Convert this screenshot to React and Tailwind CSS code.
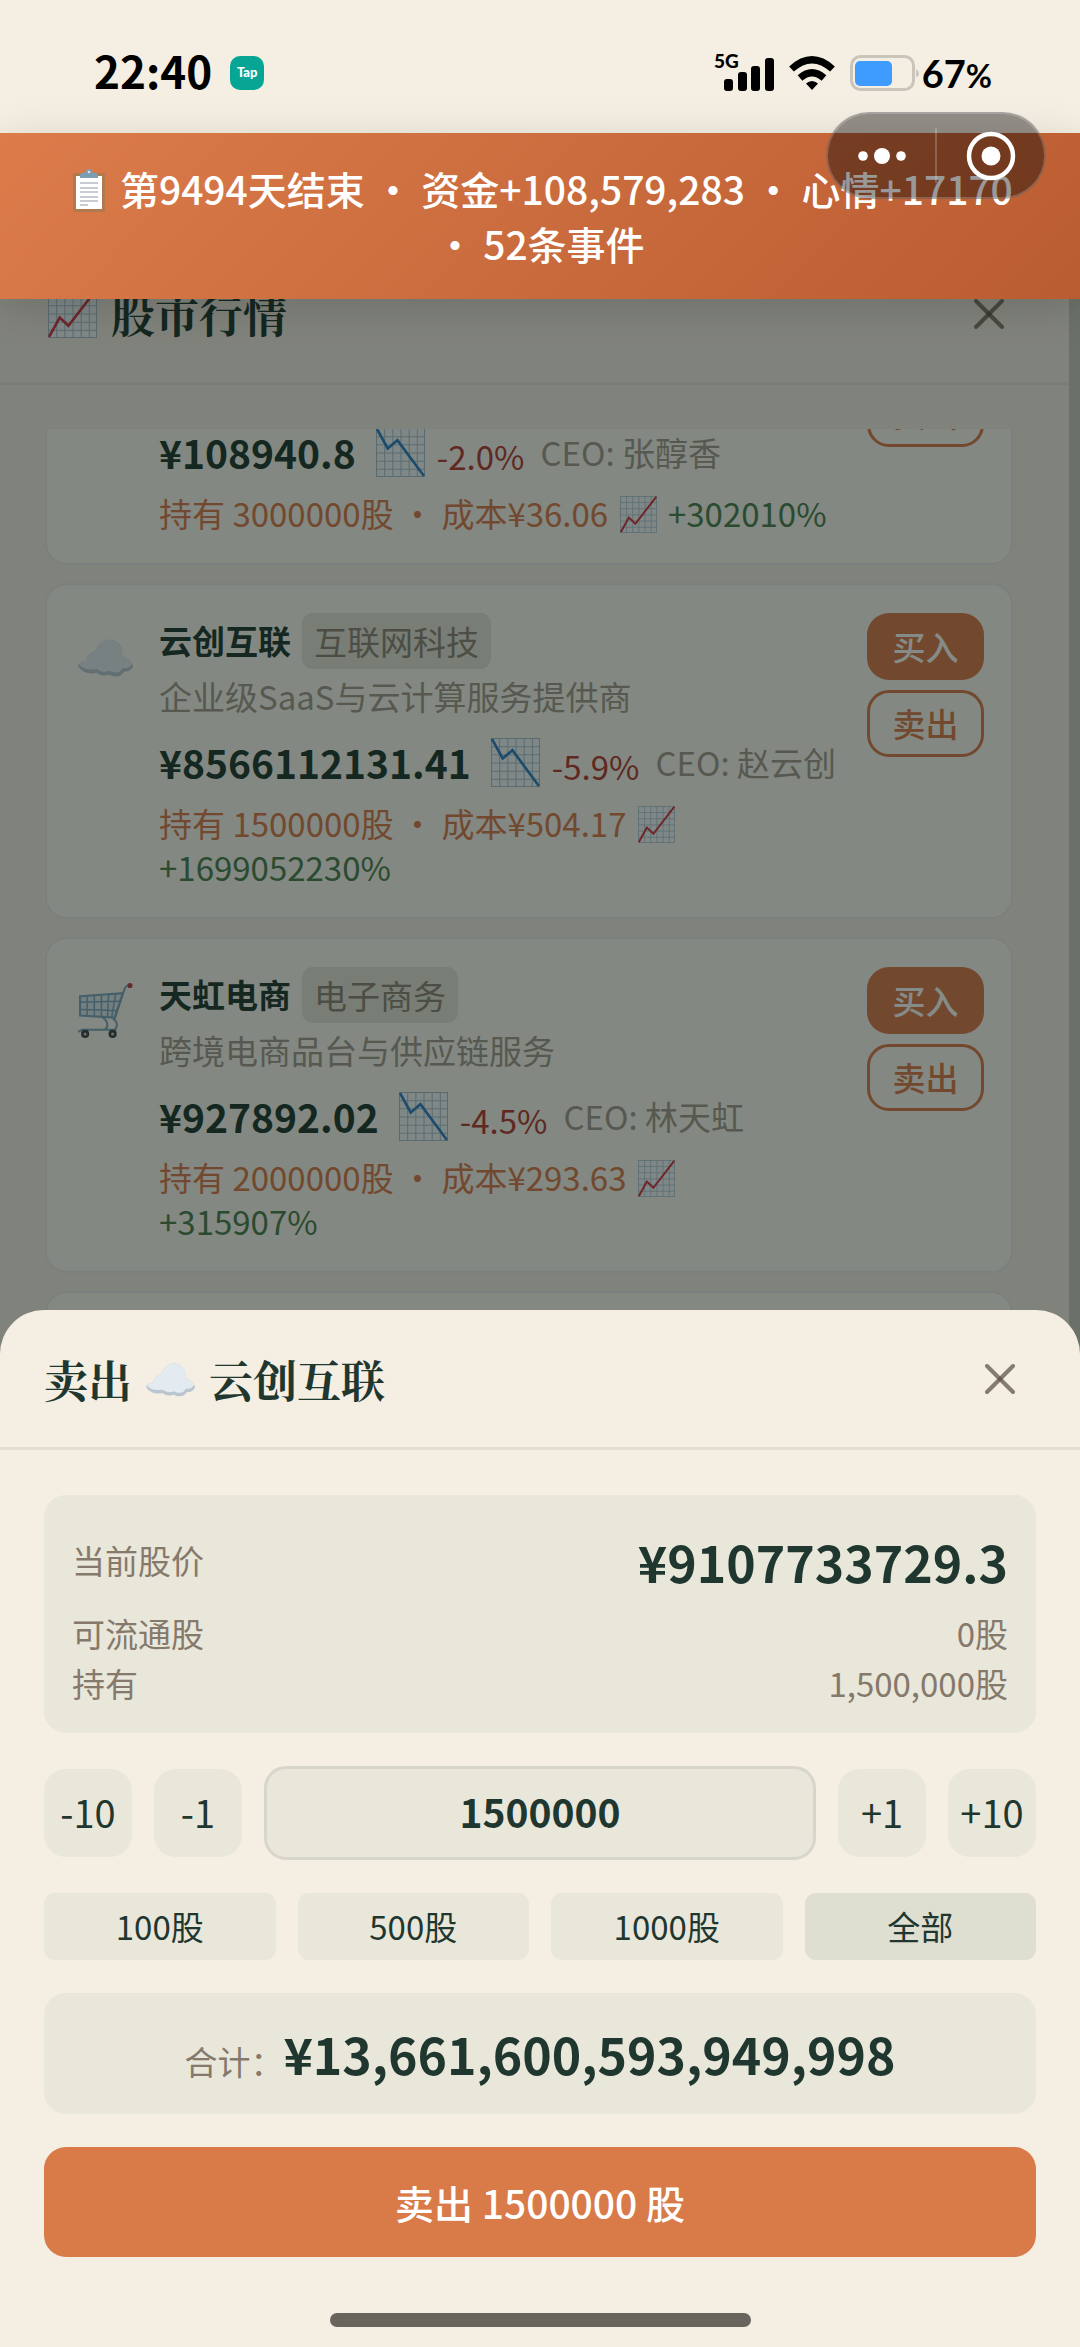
import { useState } from 'react';

const STOCKS = [
  { id: 1, price: '108940.8', change: '-2.0%', ceo: '张醇香', held: '3000000', cost: '36.06', gain: '+302010%' },
  { id: 2, Icon: Cloud, name: '云创互联', tag: '互联网科技', desc: '企业级SaaS与云计算服务提供商', price: '8566112131.41', change: '-5.9%', ceo: '赵云创', held: '1500000', cost: '504.17', gain: '+1699052230%' },
  { id: 3, Icon: Cart, name: '天虹电商', tag: '电子商务', desc: '跨境电商品台与供应链服务', price: '927892.02', change: '-4.5%', ceo: '林天虹', held: '2000000', cost: '293.63', gain: '+315907%' },
];

const serif = "font-['Noto_Serif_CJK_SC','Liberation_Serif','Noto_Sans_CJK_SC',serif]";

function Chart({ down, className }) {
  return (
    <svg viewBox="0 0 48 48" className={className} aria-hidden="true">
      <rect x="0.5" y="0.5" width="47" height="47" fill="#f3f8fb" stroke="#a9bfcb" />
      <path d="M8.5 0v48M16.5 0v48M24.5 0v48M32.5 0v48M40.5 0v48M0 8.5h48M0 16.5h48M0 24.5h48M0 32.5h48M0 40.5h48" stroke="#a9c0cd" strokeWidth="1" />
      {down
        ? <path d="M1 1L11.500 20L21 12L47 47" fill="none" stroke="#2f7fc4" strokeWidth="2.600" />
        : <path d="M1 47L11.500 28L20 36L47 1" fill="none" stroke="#d2343f" strokeWidth="2.600" />}
    </svg>
  );
}

function Cloud({ className }) {
  return (
    <svg viewBox="0 0 54 54" className={className} aria-hidden="true">
      <path d="M0 36C1 33 6 32 8 31C9 25 13 23 17 22C20 12 29 8 37 12C43 15 44 21 43 26C48 28 53 32 54 36C53 41 48 42 45 42C43 47 36 48 31 45C26 46 21 46 18 43C11 45 3 42 0 36Z" fill="#b9c6d0" />
      <path d="M1 35C2 33 6 32 8 31C9 25 13 23 17 22C20 12 29 8 37 12C43 15 44 21 43 26C48 28 52 31 53 34C51 38 47 39 44 38C42 43 36 44 31 41C26 43 22 42 18 39C11 41 5 39 1 35Z" fill="#e3ebf1" />
    </svg>
  );
}

function Cart({ className }) {
  return (
    <svg viewBox="0 0 54 54" className={className} fill="none" aria-hidden="true">
      <path d="M2 13L44 10L36 34L2 32Z" fill="#dbe6ec" stroke="#7fa6bd" strokeWidth="2" />
      <path d="M9 13v19M16 12v20M23 12v21M30 11l-1 22M37 11l-4 23M2 19l39-1M2 26l37 1" stroke="#7fa6bd" strokeWidth="1.500" />
      <path d="M36 35L45 8C46 4 48 2 51 2" stroke="#7fa6bd" strokeWidth="2" />
      <path d="M24 34C30 37 30 44 26 46M34 35C40 38 39 45 34 47M0 48L4 46H38" stroke="#7fa6bd" strokeWidth="2" />
      <circle cx="51" cy="2.500" r="2.500" fill="#b8414a" />
      <circle cx="7" cy="50" r="4" fill="#3a4246" /><circle cx="7" cy="50" r="1.500" fill="#c8ccce" />
      <circle cx="34" cy="50" r="4" fill="#3a4246" /><circle cx="34" cy="50" r="1.500" fill="#c8ccce" />
    </svg>
  );
}

function Clipboard({ className }) {
  return (
    <svg viewBox="0 0 44 44" className={className} aria-hidden="true">
      <rect x="6" y="5" width="32" height="39" rx="2" fill="#b07a4f" />
      <path d="M9 8H35V41H9Z" fill="#fff" />
      <path d="M13 15h18M13 20h18M13 24h18M13 29h18M13 33h18M13 37h8" stroke="#b7bcc4" strokeWidth="1.300" />
      <path d="M13 10V7Q13 5 16 5L19 4Q19 1 22 1Q25 1 25 4L28 5Q31 5 31 7V10Z" fill="#7d9db0" />
      <circle cx="22" cy="4" r="1.300" fill="#dce6ec" />
    </svg>
  );
}

function Cross() {
  return (
    <svg viewBox="0 0 30 30" className="size-[30px]" stroke="#5b4f42" strokeOpacity="0.72" strokeWidth="4" strokeLinecap="round" aria-hidden="true">
      <path d="M2 2L28 28" /><path d="M28 2L2 28" />
    </svg>
  );
}

function StatusBar() {
  return (
    <header className="flex h-[133px] items-center justify-between pt-3 pr-[88px] pl-[94px] text-black">
      <div className="flex items-center gap-[18px]">
        <span className="h-[50px] text-[44px] leading-[44px] font-bold">22:40</span>
        <span className="flex size-[34px] items-center justify-center rounded-[10px] bg-[#06a594] font-['Lato',sans-serif] text-[13px] font-black text-white">Tap</span>
      </div>
      <div className="flex items-center">
        <svg viewBox="0 0 60 38" className="mr-[15px] h-[38px] w-[60px] overflow-visible" aria-label="5G">
          <text x="0" y="14" fontSize="19" fontWeight="900" fontFamily="Lato, sans-serif">5G</text>
          <rect x="10" y="25" width="9" height="12" rx="3" />
          <rect x="24" y="18" width="9" height="19" rx="3" />
          <rect x="37" y="12" width="9" height="25" rx="3" />
          <rect x="51" y="4" width="9" height="33" rx="3" />
        </svg>
        <svg viewBox="0 0 46 34" className="mr-[15px] h-[34px] w-[46px]" fill="none" stroke="#000" strokeWidth="7" aria-hidden="true">
          <path d="M2.500 13Q23 -5.500 43.500 13" />
          <path d="M11 22Q23 11.500 35 22" />
          <path d="M17 27.500Q23 22.500 29 27.500L23 34Z" fill="#000" stroke="none" />
        </svg>
        <svg viewBox="0 0 72 36" className="h-9 w-[72px]" aria-hidden="true">
          <rect x="1.500" y="1.500" width="62" height="33" rx="9" fill="none" stroke="#c9c5ba" strokeWidth="3" />
          <rect x="5" y="6" width="37" height="25" rx="5" fill="#3e9bff" />
          <path d="M66 14Q69 16 69 18.500Q69 21 66 22Z" fill="#c9c5ba" />
        </svg>
        <span className="font-['Lato',sans-serif] text-[38px] leading-none font-bold">67<span className="text-[32px]">%</span></span>
      </div>
    </header>
  );
}

function StockCard({ s }) {
  return (
    <li className="flex rounded-[22px] border-2 border-[#e7e9e6] bg-[#faf9f0] pt-7 pr-[27px] pb-[26px] pl-[31px]">
      <div className="mr-[26px] w-[55px] shrink-0 pt-4">{s.Icon && <s.Icon className="size-[55px]" />}</div>
      <div className="mr-7 min-w-0 flex-1">
        <div className="flex h-14 items-center gap-[11px]">
          {s.name && <h3 className="text-[33px] font-bold">{s.name}</h3>}
          {s.tag && <span className="rounded-[11px] bg-[#e5e2d6] px-3 text-[33px] leading-[56px] text-[#8c8274]">{s.tag}</span>}
        </div>
        <p className="mt-0.5 h-[50px] text-[33px] leading-[50px] text-[#a39a8d]">{s.desc}</p>
        <div className="mt-3 flex h-[58px] items-center whitespace-nowrap">
          <strong className="mr-5 text-[39px] leading-[58px] font-bold">¥{s.price}</strong>
          <Chart down className="mr-3 size-[49px] shrink-0" />
          <span className="mr-4 pt-2 text-[33px] leading-[50px] text-[#b33a30]">{s.change}</span>
          <span className="text-[33px] leading-[50px] text-[#a39a8d]">CEO: {s.ceo}</span>
        </div>
        <p className="mt-2.5 mb-0.5 text-[33px] leading-[44px] text-[#d97a49]">
          持有 {s.held}股 ・ 成本¥{s.cost} <Chart className="mx-1 inline-block size-[37px] align-[-6px]" />{' '}
          <span className="text-[#4a7f4c]">{s.gain}</span>
        </p>
      </div>
      <div className="flex shrink-0 flex-col gap-2.5">
        <button type="button" className="h-[67px] w-[117px] rounded-[22px] bg-[#d97a49] text-[33px] font-medium text-white">买入</button>
        <button type="button" className="h-[67px] w-[117px] rounded-[22px] border-3 border-[#d97a49] text-[33px] font-medium text-[#d97a49]">卖出</button>
      </div>
    </li>
  );
}

function Market() {
  return (
    <main className="-mt-[54px] flex min-h-0 flex-1 flex-col bg-[#cbcabc] pr-[11px]">
      <div className="flex min-h-0 flex-1 flex-col bg-[#f5eee2]">
        <div className="flex h-[140px] shrink-0 items-center justify-between border-b-3 border-[#e6e2d6] pr-[65px] pl-12">
          <h2 className={`flex items-center gap-3.5 text-[44px] font-bold ${serif}`}><Chart className="size-[49px]" />股市行情</h2>
          <button type="button" aria-label="关闭行情"><Cross /></button>
        </div>
        <div className="mt-11 min-h-0 flex-1 overflow-hidden pr-14 pl-[45px]">
          {/* list is scrolled part way down */}
          <ul className="-mt-[156px] flex flex-col gap-[18px]">
            {STOCKS.map(s => <StockCard key={s.id} s={s} />)}
            <li className="h-[336px] rounded-[22px] border-2 border-[#e7e9e6] bg-[#faf9f0]" />
          </ul>
        </div>
      </div>
    </main>
  );
}

function SellSheet() {
  const [qty, setQty] = useState(1500000);
  const step = (n) => setQty(q => Math.max(0, Math.min(1500000, q + n)));
  const stepBtn = 'size-[88px] shrink-0 rounded-[22px] bg-[#e9e6da] pb-1 text-[38px]';

  return (
    <section role="dialog" aria-labelledby="sell-title" className="absolute inset-x-0 bottom-0 rounded-t-[44px] bg-[#f5eee2]">
      <div className="flex h-[140px] items-center justify-between border-b-3 border-[#e4ddd0] pr-[65px] pl-11">
        <h2 id="sell-title" className={`flex items-center gap-3.5 text-[44px] font-bold ${serif}`}>卖出<Cloud className="size-[49px]" />云创互联</h2>
        <button type="button" aria-label="关闭"><Cross /></button>
      </div>
      <div className="flex flex-col gap-[33px] px-11 pt-[45px]">
        <dl className="rounded-[22px] bg-[#e9e6da] px-7 pt-7 pb-6 text-[33px] text-[#85796b]">
          <div className="mb-2.5 flex h-[76px] items-center justify-between"><dt>当前股价</dt><dd className="text-[50px] font-bold text-[#1f372f]">¥9107733729.3</dd></div>
          <div className="flex h-[50px] items-center justify-between"><dt>可流通股</dt><dd>0股</dd></div>
          <div className="flex h-[50px] items-center justify-between"><dt>持有</dt><dd>1,500,000股</dd></div>
        </dl>
        <div className="flex items-center gap-[22px]">
          <button type="button" onClick={() => step(-10)} className={stepBtn}>-10</button>
          <button type="button" onClick={() => step(-1)} className={stepBtn}>-1</button>
          <input aria-label="卖出数量" inputMode="numeric" value={qty} onChange={e => setQty(Number(e.target.value) || 0)} className="h-[94px] min-w-0 flex-1 rounded-[22px] border-3 border-[#d8d6ca] bg-[#e9e6da] pb-1 text-center text-[39px] font-bold outline-none" />
          <button type="button" onClick={() => step(1)} className={stepBtn}>+1</button>
          <button type="button" onClick={() => step(10)} className={stepBtn}>+10</button>
        </div>
        <div className="grid grid-cols-4 gap-[22px] text-[33px]">
          {[100, 500, 1000].map(n => (
            <button key={n} type="button" onClick={() => setQty(n)} className="h-[67px] rounded-[11px] bg-[#e9e6da]">{n}股</button>
          ))}
          <button type="button" onClick={() => setQty(1500000)} className="h-[67px] rounded-[11px] bg-[#deded1]">全部</button>
        </div>
        <p className="flex h-[121px] items-center justify-center rounded-[22px] bg-[#e9e6da]">
          <span className="flex items-baseline"><span className="text-[33px] text-[#85796b]">合计：</span><strong className="text-[50px] font-bold">¥13,661,600,593,949,998</strong></span>
        </p>
        <button type="button" className="h-[110px] rounded-[22px] bg-[#d97a49] text-[39px] font-medium text-white">卖出 {qty} 股</button>
      </div>
      <div className="mx-auto mt-14 mb-5 h-3.5 w-[421px] rounded-full bg-[#67655d]" />
    </section>
  );
}

const App = () => (
  <div lang="zh-CN" className="relative flex h-screen flex-col overflow-hidden bg-[#f5eee2] font-['Noto_Sans_CJK_SC',sans-serif] text-[#1f372f]">
    <StatusBar />
    <div role="status" className="relative z-10 bg-linear-135 from-[#dc7c4b] to-[#ba5c31] px-[55px] py-7 text-center text-[39px] leading-[55px] font-medium text-white shadow-[0_8px_40px_rgba(0,0,0,0.15)]">
      <Clipboard className="inline-block size-11 align-[-7px]" /> 第9494天结束 ・ 资金+108,579,283 ・ 心情+17170 ・ 52条事件
    </div>
    <Market />
    <div className="absolute inset-x-0 top-[133px] bottom-0 bg-[#0b1814]/50" />
    <SellSheet />
    <div className="absolute top-28 right-[34px] z-20 flex h-[87px] w-[220px] items-center rounded-full border-2 border-white/20 bg-black/40">
      <button type="button" aria-label="更多" className="flex flex-1 justify-center">
        <svg viewBox="0 0 48 18" className="h-[18px] w-12" fill="#fff"><circle cx="5" cy="9" r="4.800" /><circle cx="24" cy="9" r="8" /><circle cx="43" cy="9" r="4.800" /></svg>
      </button>
      <span className="h-[55px] w-0.5 bg-white/20" />
      <button type="button" aria-label="退出" className="flex flex-1 justify-center">
        <svg viewBox="0 0 50 50" className="size-[50px]" fill="none"><circle cx="25" cy="25" r="22" stroke="#fff" strokeWidth="4.500" /><circle cx="25" cy="25" r="9.500" fill="#fff" /></svg>
      </button>
    </div>
  </div>
);

export default App;
